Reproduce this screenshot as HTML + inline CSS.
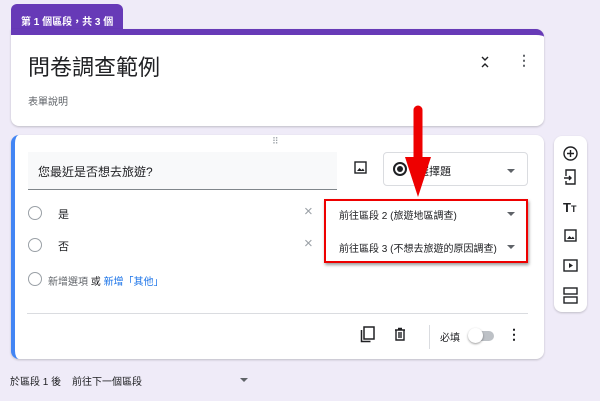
<!DOCTYPE html>
<html><head><meta charset="utf-8"><style>
*{margin:0;padding:0;box-sizing:border-box}
body{width:600px;height:401px;background:#efebf8;font-family:"Liberation Sans","Noto Sans CJK TC",sans-serif;position:relative;overflow:hidden;color:#202124}
.abs{position:absolute}
.card{position:absolute;background:#fff;border-radius:8px;box-shadow:0 1px 2px rgba(0,0,0,.2)}
.radio{position:absolute;width:14px;height:14px;border:1.5px solid #9aa0a6;border-radius:50%}
.t{position:absolute;font-size:11px;white-space:nowrap}
.dd{position:absolute;width:0;height:0;border-left:4px solid transparent;border-right:4px solid transparent;border-top:4px solid #5f6368}
</style></head><body>
<div class="abs" style="left:11px;top:4px;width:112px;height:30px;background:#673ab7;border-radius:6px 6px 0 0;color:#fff;font-size:10px;font-weight:bold;padding:9px 0 0 10px">第 1 個區段，共 3 個</div>
<div class="card" style="left:11px;top:29px;width:533px;height:97px;border-top:6px solid #673ab7;border-radius:0 8px 8px 8px"></div>
<div class="t" style="left:28px;top:50px;font-size:22px">問卷調查範例</div>
<div class="t" style="left:28px;top:93px;font-size:10px;color:#5f6368">表單說明</div>
<svg class="abs" style="left:480px;top:55px" width="10" height="14" viewBox="0 0 10 14" fill="none" stroke="#202124" stroke-width="1.4"><path d="M2 2l3 3 3-3M2 12l3-3 3 3"/></svg>
<div class="t" style="left:517px;top:52px;font-size:14px;font-weight:bold;color:#5f6368">⋮</div>

<div class="card" style="left:11px;top:135px;width:533px;height:224px;border-left:4px solid #4285f4"></div>
<div class="t" style="left:272px;top:136px;font-size:9px;color:#9aa0a6;letter-spacing:1px">⠿</div>
<div class="abs" style="left:28px;top:152px;width:309px;height:38px;background:#f8f9fa;border-bottom:1px solid #80868b"></div>
<div class="t" style="left:38px;top:163px;font-size:12px">您最近是否想去旅遊?</div>
<svg class="abs" style="left:354px;top:161px" width="13" height="13" viewBox="0 0 13 13"><rect x="1" y="1" width="11" height="11" fill="none" stroke="#202124" stroke-width="1.4"/><path d="M3 10l2.5-3 2 2 1.5-1.5 1.5 2.5z" fill="#202124"/></svg>
<div class="abs" style="left:383px;top:152px;width:145px;height:34px;border:1px solid #dadce0;border-radius:4px"></div>
<div class="abs" style="left:393px;top:162px;width:14px;height:14px;border:2px solid #202124;border-radius:50%"><div style="margin:2px;width:6px;height:6px;background:#202124;border-radius:50%"></div></div>
<div class="t" style="left:418px;top:163px;font-size:11px">選擇題</div>
<div class="dd" style="left:507px;top:169px"></div>

<div class="radio" style="left:28px;top:206px"></div>
<div class="t" style="left:58px;top:206px">是</div>
<div class="t" style="left:304px;top:203px;font-size:15px;color:#9aa0a6">×</div>
<div class="radio" style="left:28px;top:238px"></div>
<div class="t" style="left:58px;top:238px">否</div>
<div class="t" style="left:304px;top:235px;font-size:15px;color:#9aa0a6">×</div>
<div class="t" style="left:339px;top:207px;font-size:10px">前往區段 2 (旅遊地區調查)</div>
<div class="dd" style="left:507px;top:212px"></div>
<div class="t" style="left:339px;top:240px;font-size:10px">前往區段 3 (不想去旅遊的原因調查)</div>
<div class="dd" style="left:507px;top:245px"></div>
<div class="abs" style="left:324px;top:199px;width:204px;height:64px;border:2px solid #e00;box-shadow:1px 2px 3px rgba(0,0,0,.4)"></div>

<div class="radio" style="left:28px;top:272px"></div>
<div class="t" style="left:48px;top:273px;font-size:10px;color:#5f6368">新增選項 <span style="color:#202124">或</span> <span style="color:#1a73e8">新增「其他」</span></div>
<div class="abs" style="left:27px;top:313px;width:501px;height:1px;background:#dadce0"></div>
<svg class="abs" style="left:360px;top:326px" width="16" height="17" viewBox="0 0 16 17"><rect x="4" y="1" width="10" height="12" fill="none" stroke="#202124" stroke-width="1.5"/><path d="M1.5 4v11.5h9" fill="none" stroke="#202124" stroke-width="1.5"/></svg>
<svg class="abs" style="left:394px;top:327px" width="12" height="14" viewBox="0 0 12 14"><path d="M1 3h10M4 1.5h4M2 3v10h8V3M5 5v6M7 5v6" fill="none" stroke="#202124" stroke-width="1.4"/></svg>
<div class="abs" style="left:429px;top:325px;width:1px;height:24px;background:#dadce0"></div>
<div class="t" style="left:440px;top:329px;font-size:10px">必填</div>
<div class="abs" style="left:470px;top:331px;width:24px;height:10px;background:#bdc1c6;border-radius:5px"></div>
<div class="abs" style="left:468px;top:328px;width:15px;height:15px;background:#fff;border-radius:50%;box-shadow:0 1px 2px rgba(0,0,0,.4)"></div>
<div class="t" style="left:507px;top:326px;font-size:14px;font-weight:bold">⋮</div>

<div class="card" style="left:554px;top:136px;width:33px;height:176px"></div>
<svg class="abs" style="left:562px;top:145px" width="17" height="162" viewBox="0 0 17 162" fill="none" stroke="#202124" stroke-width="1.4">
<circle cx="8.5" cy="8.5" r="6.5"/><path d="M8.5 5v7M5 8.5h7"/>
<path d="M4 31v-6h9v14H4v-3M2 33h7M7 31l2 2-2 2"/>
<text x="1" y="67" font-size="13" font-weight="bold" fill="#202124" stroke="none" font-family="Liberation Sans">T</text><text x="9" y="67" font-size="9" font-weight="bold" fill="#202124" stroke="none" font-family="Liberation Sans">T</text>
<rect x="3" y="85" width="11" height="11"/><path d="M5 94l2.5-3 2 2 1.5-1.5 1.5 2.5z" fill="#202124" stroke="none"/>
<rect x="2" y="115" width="13" height="11"/><path d="M7 118v5l4-2.5z" fill="#202124" stroke="none"/>
<rect x="2" y="143" width="13" height="6"/><rect x="2" y="152" width="13" height="6"/>
</svg>

<svg class="abs" style="left:402px;top:105px" width="32" height="95" viewBox="0 0 32 95"><path d="M16 5v55" stroke="#e00" stroke-width="9" stroke-linecap="round"/><path d="M3 52h26l-13 40z" fill="#e00"/></svg>

<div class="t" style="left:10px;top:373px;font-size:10px">於區段 1 後</div>
<div class="t" style="left:72px;top:373px;font-size:10px">前往下一個區段</div>
<div class="dd" style="left:240px;top:378px"></div>
</body></html>
